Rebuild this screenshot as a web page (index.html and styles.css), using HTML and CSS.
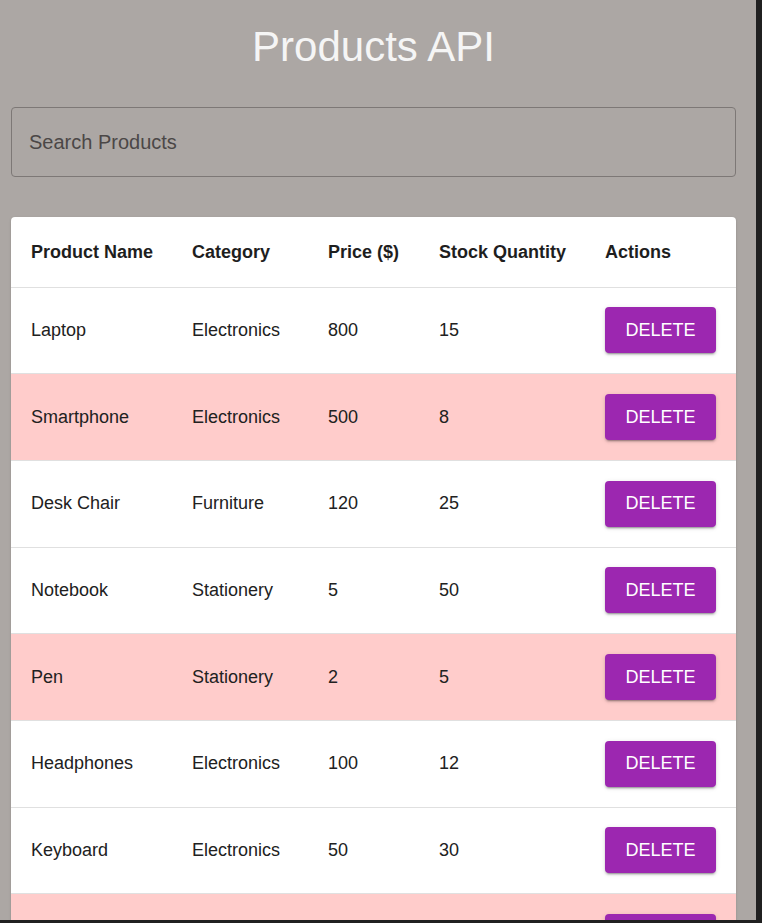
FILE: index.html
```html
<!DOCTYPE html>
<html lang="en">
<head>
<meta charset="utf-8">
<title>Products API</title>
<link rel="stylesheet" href="styles.css">
</head>
<body>
<div class="page">
  <h1 class="title">Products API</h1>
  <div class="search">
    <input class="search-input" type="text" placeholder="Search Products">
  </div>
  <div class="card">
    <table class="products">
      <colgroup>
        <col class="c1"><col class="c2"><col class="c3"><col class="c4"><col class="c5">
      </colgroup>
      <thead>
        <tr>
          <th>Product Name</th><th>Category</th><th>Price ($)</th><th>Stock Quantity</th><th>Actions</th>
        </tr>
      </thead>
      <tbody>
        <tr><td>Laptop</td><td>Electronics</td><td>800</td><td>15</td><td><button class="btn">Delete</button></td></tr>
        <tr class="low"><td>Smartphone</td><td>Electronics</td><td>500</td><td>8</td><td><button class="btn">Delete</button></td></tr>
        <tr><td>Desk Chair</td><td>Furniture</td><td>120</td><td>25</td><td><button class="btn">Delete</button></td></tr>
        <tr><td>Notebook</td><td>Stationery</td><td>5</td><td>50</td><td><button class="btn">Delete</button></td></tr>
        <tr class="low"><td>Pen</td><td>Stationery</td><td>2</td><td>5</td><td><button class="btn">Delete</button></td></tr>
        <tr><td>Headphones</td><td>Electronics</td><td>100</td><td>12</td><td><button class="btn">Delete</button></td></tr>
        <tr><td>Keyboard</td><td>Electronics</td><td>50</td><td>30</td><td><button class="btn">Delete</button></td></tr>
        <tr class="low"><td>Mouse</td><td>Electronics</td><td>25</td><td>7</td><td><button class="btn">Delete</button></td></tr>
      </tbody>
    </table>
  </div>
</div>
<div class="frame-right"></div>
<div class="frame-bottom"></div>
</body>
</html>
```

FILE: styles.css
```css
html, body {
  margin: 0;
  padding: 0;
}
body {
  background: #aca7a4;
  font-family: "Liberation Sans", Arial, sans-serif;
  color: #212121;
}
.page {
  width: 725px;
  padding: 23px 20px 0 11px;
}
.title {
  margin: 0;
  font-size: 42px;
  line-height: 48px;
  font-weight: 400;
  color: #f5f5f5;
  text-align: center;
}
.search {
  margin-top: 36px;
}
.search-input {
  display: block;
  box-sizing: border-box;
  width: 725px;
  height: 70px;
  margin: 0;
  padding: 0 17px;
  border: 1px solid #7d7876;
  border-radius: 4px;
  background: transparent;
  font-family: "Liberation Sans", Arial, sans-serif;
  font-size: 20px;
  color: #222;
  outline: none;
}
.search-input::placeholder {
  color: #4b4747;
  opacity: 1;
}
.card {
  margin-top: 40px;
  background: #fff;
  border-radius: 4px;
  overflow: hidden;
  box-shadow: 0 2px 1px -1px rgba(0,0,0,0.2), 0 1px 1px 0 rgba(0,0,0,0.14), 0 1px 3px 0 rgba(0,0,0,0.12);
}
.products {
  width: 725px;
  table-layout: fixed;
  border-collapse: collapse;
  font-size: 18px;
}
.c1 { width: 161px; }
.c2 { width: 136px; }
.c3 { width: 111px; }
.c4 { width: 166px; }
.c5 { width: 151px; }
.products th,
.products td {
  text-align: left;
  padding: 0 0 0 20px;
  border-bottom: 1px solid #e0e0e0;
  vertical-align: middle;
  white-space: nowrap;
}
.products th {
  height: 70px;
  padding-top: 2px;
  box-sizing: border-box;
  font-weight: 700;
  color: #1e1e1e;
}
.products tbody tr {
  height: 86.7px;
}
.products td {
  color: #212121;
}
.products tr.low {
  background: #ffcccb;
}
.btn {
  display: block;
  width: 111px;
  height: 46px;
  border: 0;
  border-radius: 4px;
  background: #9c27b0;
  color: #fff;
  font-family: "Liberation Sans", Arial, sans-serif;
  font-size: 18px;
  text-transform: uppercase;
  cursor: pointer;
  box-shadow: 0 3px 1px -2px rgba(0,0,0,0.2), 0 2px 2px 0 rgba(0,0,0,0.14), 0 1px 5px 0 rgba(0,0,0,0.12);
}
.frame-right {
  position: fixed;
  top: 0;
  right: 0;
  width: 6px;
  height: 100%;
  background: #202020;
}
.frame-bottom {
  position: fixed;
  left: 0;
  bottom: 0;
  width: 100%;
  height: 3px;
  background: #202020;
}
```
